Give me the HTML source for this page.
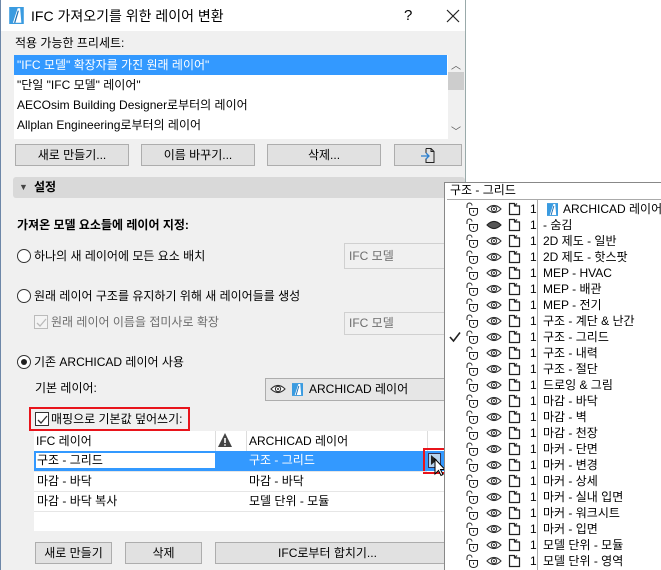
<!DOCTYPE html>
<html><head><meta charset="utf-8"><style>
*{box-sizing:border-box;margin:0;padding:0}
body{width:661px;height:570px;background:#fff;position:relative;overflow:hidden;font-family:"Liberation Sans","Noto Sans CJK KR","NanumGothic",sans-serif;font-size:12px;color:#000}
.a{position:absolute;white-space:nowrap}
.btn{position:absolute;background:#e1e1e1;border:1px solid #adadad;text-align:center;line-height:20px;font-size:12px}
.dd{position:absolute;background:#f0f0f0;border:1px solid #d0d0d0;color:#6d6d6d;padding-left:4px;line-height:22px}
.radio{position:absolute;width:14px;height:14px;border:1px solid #333;border-radius:50%;background:#fff}
.row{position:absolute;left:0;width:217px;height:16px}
.row span{position:absolute;line-height:16px}
</style></head><body>
<svg width="0" height="0" style="position:absolute">
<defs>
<symbol id="lk" viewBox="0 0 14 14"><path d="M2 6V3.5a2.5 2.5 0 0 1 5 0" fill="none" stroke="#222" stroke-width="1"/><path d="M4.5 6.5h8v4a4 3 0 0 1-8 0z" fill="#fff" stroke="#222" stroke-width="1"/><path d="M8.5 8.5v2" stroke="#222"/></symbol>
<symbol id="ey" viewBox="0 0 16 10"><path d="M1 5Q8-2 15 5Q8 12 1 5z" fill="#fff" stroke="#333" stroke-width="1.1"/><circle cx="8" cy="5" r="2.6" fill="none" stroke="#333" stroke-width="1.1"/><circle cx="8" cy="5" r="1" fill="#333"/></symbol>
<symbol id="eyc" viewBox="0 0 16 10"><path d="M1 5Q8-2 15 5Q8 12 1 5z" fill="#555" stroke="#222" stroke-width="1.1"/></symbol>
<symbol id="fd" viewBox="0 0 13 14"><path d="M1.5 1.5h5v2.5h5v8.5h-10z M6.5 4l2.5-2.5" fill="#fff" stroke="#222" stroke-width="1.2"/></symbol>
<symbol id="ai" viewBox="0 0 12 14"><rect width="12" height="14" fill="#3a9be0"/><path d="M3 13L7 1h2l1 12z" fill="#fff"/><path d="M4.5 13L7.5 3" stroke="#1b6fb5" stroke-width="1"/></symbol>
</defs></svg>

<div class="a" style="left:0;top:0;width:466px;height:570px;background:#f0f0f0;border-left:1px solid #6d87a8;border-right:1px solid #9aa"></div>
<div class="a" style="left:1px;top:0;width:464px;height:31px;background:#fff"></div>
<svg class="a" style="left:9px;top:7px" width="15" height="17"><use href="#ai" width="15" height="17"/></svg>
<div class="a" style="left:31px;top:6px;font-size:14px;line-height:20px">IFC 가져오기를 위한 레이어 변환</div>
<div class="a" style="left:404px;top:6px;font-size:15px;line-height:20px">?</div>
<svg class="a" style="left:446px;top:9px" width="14" height="14"><path d="M1 1L13 13M13 1L1 13" stroke="#222" stroke-width="1.2"/></svg>

<div class="a" style="left:15px;top:35px;line-height:16px">적용 가능한 프리세트:</div>
<div class="a" style="left:14px;top:55px;width:450px;height:84px;background:#fff"></div>
<div class="a" style="left:14px;top:55px;width:433px;height:20px;background:#3399ff"></div>
<div class="a" style="left:17px;top:55px;line-height:20px;color:#fff">"IFC 모델" 확장자를 가진 원래 레이어"</div>
<div class="a" style="left:17px;top:75px;line-height:20px">"단일 "IFC 모델" 레이어"</div>
<div class="a" style="left:17px;top:95px;line-height:20px">AECOsim Building Designer로부터의 레이어</div>
<div class="a" style="left:17px;top:115px;line-height:20px">Allplan Engineering로부터의 레이어</div>
<div class="a" style="left:448px;top:55px;width:16px;height:84px;background:#f0f0f0"></div>
<div class="a" style="left:448px;top:72px;width:16px;height:18px;background:#cdcdcd"></div>
<div class="a" style="left:451px;top:57px;font-size:10px;color:#555">︿</div>
<div class="a" style="left:451px;top:123px;font-size:10px;color:#555">﹀</div>

<div class="btn" style="left:15px;top:144px;width:114px;height:22px">새로 만들기...</div>
<div class="btn" style="left:141px;top:144px;width:114px;height:22px">이름 바꾸기...</div>
<div class="btn" style="left:267px;top:144px;width:114px;height:22px">삭제...</div>
<div class="btn" style="left:394px;top:144px;width:68px;height:22px"></div>
<svg class="a" style="left:420px;top:147px" width="16" height="17"><path d="M6 1.5h5l3 3v11H6v-4M6 6V1.5M11 1.5v3h3" fill="none" stroke="#222"/><path d="M1 9h8M6 6l3 3-3 3" fill="none" stroke="#2a7fd0" stroke-width="1.3"/></svg>

<div class="a" style="left:13px;top:177px;width:452px;height:21px;background:#d9d9d9;border-radius:3px"></div>
<div class="a" style="left:19px;top:182px;font-size:9px;color:#444">▼</div>
<div class="a" style="left:34px;top:178px;line-height:19px;font-weight:bold">설정</div>

<div class="a" style="left:17px;top:217px;line-height:16px;font-weight:bold">가져온 모델 요소들에 레이어 지정:</div>
<div class="radio" style="left:17px;top:249px"></div>
<div class="a" style="left:34px;top:248px;line-height:16px">하나의 새 레이어에 모든 요소 배치</div>
<div class="dd" style="left:344px;top:243px;width:110px;height:26px;line-height:24px">IFC 모델</div>
<div class="radio" style="left:17px;top:289px"></div>
<div class="a" style="left:34px;top:288px;line-height:16px">원래 레이어 구조를 유지하기 위해 새 레이어들를 생성</div>
<div class="a" style="left:34px;top:315px;width:14px;height:14px;border:1px solid #bbb;background:#f4f4f4"></div>
<svg class="a" style="left:35px;top:316px" width="13" height="13"><path d="M2 7l3 3 6-7" fill="none" stroke="#bbb" stroke-width="1.3"/></svg>
<div class="a" style="left:51px;top:314px;line-height:16px;color:#6d6d6d">원래 레이어 이름을 접미사로 확장</div>
<div class="dd" style="left:344px;top:312px;width:110px;height:23px;line-height:21px">IFC 모델</div>
<div class="radio" style="left:17px;top:355px"></div>
<div class="a" style="left:21px;top:359px;width:6px;height:6px;border-radius:50%;background:#222"></div>
<div class="a" style="left:34px;top:354px;line-height:16px">기존 ARCHICAD 레이어 사용</div>
<div class="a" style="left:35px;top:380px;line-height:16px">기본 레이어:</div>
<div class="a" style="left:265px;top:378px;width:190px;height:23px;background:#e6e6e6;border:1px solid #adadad"></div>
<svg class="a" style="left:270px;top:384px" width="16" height="11"><use href="#ey" width="16" height="10"/></svg>
<svg class="a" style="left:292px;top:383px" width="11" height="13"><use href="#ai" width="11" height="13"/></svg>
<div class="a" style="left:309px;top:380px;line-height:18px">ARCHICAD 레이어</div>

<div class="a" style="left:29px;top:407px;width:161px;height:24px;border:2px solid #e8141b"></div>
<div class="a" style="left:35px;top:412px;width:14px;height:14px;border:1px solid #333;background:#fff"></div>
<svg class="a" style="left:36px;top:413px" width="13" height="13"><path d="M2 7l3 3 6-7" fill="none" stroke="#333" stroke-width="1.3"/></svg>
<div class="a" style="left:51px;top:411px;line-height:16px">매핑으로 기본값 덮어쓰기:</div>

<div class="a" style="left:34px;top:431px;width:420px;height:100px;background:#fff"></div>
<div class="a" style="left:215px;top:431px;width:1px;height:20px;background:#ddd"></div>
<div class="a" style="left:246px;top:431px;width:1px;height:20px;background:#ddd"></div>
<div class="a" style="left:427px;top:431px;width:1px;height:20px;background:#ddd"></div>
<div class="a" style="left:36px;top:432px;line-height:18px">IFC 레이어</div>
<svg class="a" style="left:217px;top:432px" width="16" height="16"><path d="M8 1L15 15H1z" fill="#444"/><path d="M8 6v5" stroke="#fff" stroke-width="1.6"/><circle cx="8" cy="13" r="0.9" fill="#fff"/></svg>
<div class="a" style="left:249px;top:432px;line-height:18px">ARCHICAD 레이어</div>
<div class="a" style="left:34px;top:451px;width:420px;height:20px;background:#3399ff"></div>
<div class="a" style="left:35px;top:452px;width:181px;height:17px;background:#fff;border:1px solid #3399ff"></div>
<div class="a" style="left:37px;top:451px;line-height:18px">구조 - 그리드</div>
<div class="a" style="left:249px;top:451px;line-height:18px;color:#fff">구조 - 그리드</div>
<div class="a" style="left:423px;top:448px;width:24px;height:26px;border:2px solid #e8141b"></div>
<div class="a" style="left:428px;top:453px;width:13px;height:15px;background:#b9d4ee;border:1px solid #335"></div>
<div class="a" style="left:431px;top:455px;width:0;height:0;border-left:6px solid #222;border-top:5px solid transparent;border-bottom:5px solid transparent"></div>
<svg class="a" style="left:434px;top:458px" width="12" height="20"><path d="M1 1v15l3.5-3.5 2.5 5 2-1-2.5-5H11z" fill="#fff" stroke="#000"/></svg>
<div class="a" style="left:34px;top:471px;width:393px;height:1px;background:#e6e6e6"></div>
<div class="a" style="left:37px;top:471px;line-height:20px">마감 - 바닥</div>
<div class="a" style="left:249px;top:471px;line-height:20px">마감 - 바닥</div>
<div class="a" style="left:34px;top:491px;width:410px;height:1px;background:#e6e6e6"></div>
<div class="a" style="left:37px;top:491px;line-height:20px">마감 - 바닥 복사</div>
<div class="a" style="left:249px;top:491px;line-height:20px">모델 단위 - 모듈</div>
<div class="a" style="left:34px;top:511px;width:410px;height:1px;background:#e6e6e6"></div>

<div class="btn" style="left:35px;top:542px;width:77px;height:22px">새로 만들기</div>
<div class="btn" style="left:125px;top:542px;width:77px;height:22px">삭제</div>
<div class="btn" style="left:215px;top:542px;width:240px;height:22px;padding-right:15px">IFC로부터 합치기...</div>

<div class="a" style="left:444px;top:182px;width:217px;height:388px;background:#fff;border:1px solid #888;border-right:none;border-bottom:none"></div>
<div class="a" style="left:450px;top:182px;line-height:17px">구조 - 그리드</div>
<div class="a" style="left:447px;top:199px;width:214px;height:1px;background:#aaa"></div>
<div class="a" style="left:537px;top:200px;width:1px;height:370px;background:#aaa"></div>
<div class="a" style="left:444px;top:201px;width:217px;height:369px" id="rows">
<div class="row" style="top:0"><svg class="a" style="left:21px;top:1px" width="14" height="14"><use href="#lk"/></svg><svg class="a" style="left:42px;top:3px" width="16" height="10"><use href="#ey"/></svg><svg class="a" style="left:64px;top:1px" width="13" height="14"><use href="#fd"/></svg><span style="left:86px">1</span><svg class="a" style="left:103px;top:2px" width="11" height="13"><use href="#ai" width="11" height="13"/></svg><span style="left:119px">ARCHICAD 레이어</span></div>
<div class="row" style="top:16px"><svg class="a" style="left:21px;top:1px" width="14" height="14"><use href="#lk"/></svg><svg class="a" style="left:42px;top:3px" width="16" height="10"><use href="#eyc"/></svg><svg class="a" style="left:64px;top:1px" width="13" height="14"><use href="#fd"/></svg><span style="left:86px">1</span><span style="left:99px">- 숨김</span></div>
</div>
<script>
var L=["2D 제도 - 일반","2D 제도 - 핫스팟","MEP - HVAC","MEP - 배관","MEP - 전기","구조 - 계단 &amp; 난간","구조 - 그리드","구조 - 내력","구조 - 절단","드로잉 &amp; 그림","마감 - 바닥","마감 - 벽","마감 - 천장","마커 - 단면","마커 - 변경","마커 - 상세","마커 - 실내 입면","마커 - 워크시트","마커 - 입면","모델 단위 - 모듈","모델 단위 - 영역"];
var h="";
for(var i=0;i<L.length;i++){var t=(i+2)*16;
h+='<div class="row" style="top:'+t+'px">'+(i==6?'<svg class="a" style="left:5px;top:2px" width="12" height="12"><path d="M1 6l3.5 4L11 1.5" fill="none" stroke="#222" stroke-width="1.6"/></svg>':'')+'<svg class="a" style="left:21px;top:1px" width="14" height="14"><use href="#lk"/></svg><svg class="a" style="left:42px;top:3px" width="16" height="10"><use href="#ey"/></svg><svg class="a" style="left:64px;top:1px" width="13" height="14"><use href="#fd"/></svg><span style="left:86px">1</span><span style="left:99px">'+L[i]+'</span></div>';}
document.getElementById("rows").insertAdjacentHTML("beforeend",h);
</script>
</body></html>
